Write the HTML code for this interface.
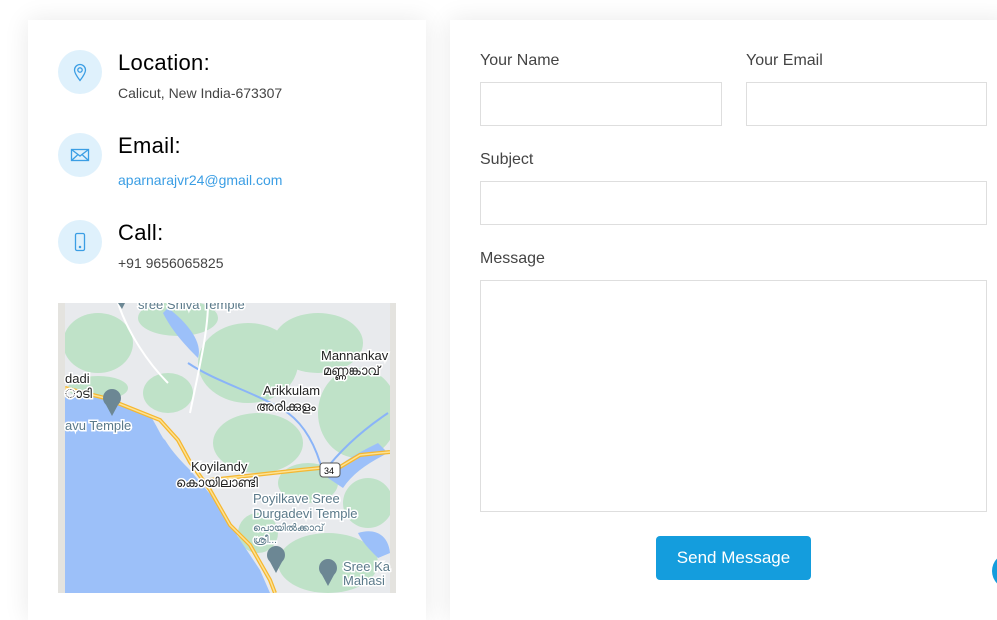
<!DOCTYPE html>
<html><head><meta charset="utf-8"><style>
body{margin:0;width:997px;height:601px;overflow:hidden;background:#fff;font-family:"Liberation Sans",sans-serif;position:relative}
.card{position:absolute;background:#fff;box-shadow:0 0 24px rgba(0,0,0,0.09)}
.ic{position:absolute;left:58px;width:44px;height:44px;border-radius:50%;background:#dff1fc}
.ic svg{position:absolute;left:12px;top:12px}
h4{position:absolute;left:118px;margin:0;font-size:22px;font-weight:normal;color:#000;letter-spacing:0.3px}
.sub{position:absolute;left:118px;font-size:14px;color:#444}
label{position:absolute;font-size:16px;color:#444}
.in{position:absolute;border:1px solid #dedede;box-sizing:border-box}
.btn{position:absolute;left:656px;top:536px;width:155px;height:44px;background:#149ddd;border-radius:4px;color:#fff;font-size:17px;text-align:center;line-height:44px}
</style></head><body>
<div class="card" style="left:28px;top:20px;width:398px;height:600px"></div>
<div class="card" style="left:450px;top:20px;width:560px;height:600px"></div>

<div class="ic" style="top:50px"><svg width="20" height="20" viewBox="0 0 20 20" fill="none" stroke="#3b9ee4" stroke-width="1.3"><path d="M10 18.5C6.5 14 4.5 11 4.5 8a5.5 5.5 0 0 1 11 0c0 3-2 6-5.5 10.5z"/><circle cx="10" cy="8" r="2.2"/></svg></div>
<h4 style="top:50px">Location:</h4>
<div class="sub" style="top:85px">Calicut, New India-673307</div>

<div class="ic" style="top:133px"><svg width="20" height="20" viewBox="0 0 20 20" fill="none" stroke="#3b9ee4" stroke-width="1.3"><rect x="1.5" y="4.5" width="17" height="11"/><path d="M1.5 4.5l8.5 6.5 8.5-6.5M1.5 15.5l6-5.5M18.5 15.5l-6-5.5"/></svg></div>
<h4 style="top:133px">Email:</h4>
<div class="sub" style="top:172px;color:#3b9ee4">aparnarajvr24@gmail.com</div>

<div class="ic" style="top:220px"><svg width="20" height="20" viewBox="0 0 20 20" fill="none" stroke="#3b9ee4" stroke-width="1.3"><rect x="5.5" y="1.5" width="9" height="17" rx="1.5"/><circle cx="10" cy="15" r="0.6" fill="#3b9ee4"/></svg></div>
<h4 style="top:220px">Call:</h4>
<div class="sub" style="top:255px">+91 9656065825</div>

<svg style="position:absolute;left:58px;top:303px" width="338" height="290" viewBox="0 0 338 290">
<rect width="338" height="290" fill="#e8eaed"/>
<g fill="#bfe2c8">
<ellipse cx="40" cy="40" rx="35" ry="30"/><ellipse cx="120" cy="15" rx="40" ry="18"/>
<ellipse cx="190" cy="60" rx="50" ry="40"/><ellipse cx="260" cy="40" rx="45" ry="30"/>
<ellipse cx="300" cy="110" rx="40" ry="45"/><ellipse cx="200" cy="140" rx="45" ry="30"/>
<ellipse cx="110" cy="90" rx="25" ry="20"/><ellipse cx="250" cy="180" rx="30" ry="20"/>
<ellipse cx="310" cy="200" rx="25" ry="25"/><ellipse cx="270" cy="260" rx="50" ry="30"/>
<ellipse cx="200" cy="230" rx="20" ry="20"/><ellipse cx="40" cy="85" rx="30" ry="12"/>
</g>
<g fill="#9cc0f9">
<path d="M7 92L42 95L72 105L92 112C100 125 104 135 107 137C115 150 125 160 132 167L157 197L182 237L202 267L212 290L7 290Z"/>
<path d="M110 5C130 20 145 40 140 55C130 45 115 30 105 10Z"/>
<path d="M270 175C280 160 300 150 320 140L330 150C310 160 295 170 285 185Z"/>
<path d="M300 230C315 225 330 230 332 250L320 255C310 245 305 240 300 230Z"/>
</g>
<g fill="none" stroke="#8ab4f8" stroke-width="2">
<path d="M130 60C160 80 200 90 230 110C250 125 260 150 265 170"/>
<path d="M265 170C280 150 300 130 330 110"/>
</g>
<g fill="none" stroke="#fff" stroke-width="2"><path d="M150 0C150 30 140 70 132 110M60 0C70 30 90 60 110 80"/></g>
<g fill="none" stroke="#f5b731" stroke-width="4">
<path d="M7 85L47 95L102 117L120 137L132 159L152 187L172 222L192 242L212 277L217 290"/>
<path d="M152 177L242 167L262 165L277 167L302 152L332 149"/>
</g>
<g fill="none" stroke="#fde293" stroke-width="1.5">
<path d="M7 85L47 95L102 117L120 137L132 159L152 187L172 222L192 242L212 277L217 290"/>
<path d="M152 177L242 167L262 165L277 167L302 152L332 149"/>
</g>
<rect x="0" y="0" width="7" height="290" fill="#e4e3df"/><rect x="332" y="0" width="6" height="290" fill="#e4e3df"/>
<g font-family="Liberation Sans, sans-serif" font-size="13" fill="#222" stroke="#fff" stroke-width="3" paint-order="stroke">
<text x="263" y="57">Mannankav</text><text x="265" y="72" font-family="Noto Sans CJK SC, sans-serif">മണ്ണങ്കാവ്</text>
<text x="205" y="92">Arikkulam</text><text x="198" y="108" font-family="Noto Sans CJK SC, sans-serif">അരിക്കുളം</text>
<text x="133" y="168">Koyilandy</text><text x="118" y="184" font-family="Noto Sans CJK SC, sans-serif">കൊയിലാണ്ടി</text>
<text x="7" y="80">dadi</text><text x="7" y="95" font-family="Noto Sans CJK SC, sans-serif">ാടി</text>
</g>
<g font-family="Liberation Sans, sans-serif" font-size="13" fill="#5b7a8a" stroke="#fff" stroke-width="3" paint-order="stroke">
<text x="80" y="6">sree Shiva Temple</text><text x="7" y="127">avu Temple</text>
<text x="195" y="200">Poyilkave Sree</text><text x="195" y="215">Durgadevi Temple</text>
<text x="195" y="228" font-size="10">പൊയിൽക്കാവ്</text><text x="195" y="240" font-size="10">ശ്രീ...</text>
<text x="285" y="268">Sree Ka</text><text x="285" y="282">Mahasi</text>
</g>
<g fill="#6c8794"><circle cx="54" cy="95" r="9"/><path d="M47 100L54 113L61 100Z"/>
<circle cx="218" cy="252" r="9"/><path d="M211 257L218 270L225 257Z"/>
<circle cx="270" cy="265" r="9"/><path d="M263 270L270 283L277 270Z"/>
<path d="M60 0L67 0L64 6Z"/></g>
<rect x="262" y="160" width="20" height="14" rx="3" fill="#fff" stroke="#555"/><text x="266" y="171" font-size="9" font-family="Liberation Sans">34</text>
</svg>

<label style="left:480px;top:52px">Your Name</label>
<label style="left:746px;top:52px">Your Email</label>
<div class="in" style="left:480px;top:82px;width:242px;height:44px"></div>
<div class="in" style="left:746px;top:82px;width:241px;height:44px"></div>
<label style="left:480px;top:151px">Subject</label>
<div class="in" style="left:480px;top:181px;width:507px;height:44px"></div>
<label style="left:480px;top:250px">Message</label>
<div class="in" style="left:480px;top:280px;width:507px;height:232px"></div>
<div class="btn">Send Message</div>
<div style="position:absolute;left:992px;top:553px;width:36px;height:36px;border-radius:50%;background:#149ddd"></div>
</body></html>
